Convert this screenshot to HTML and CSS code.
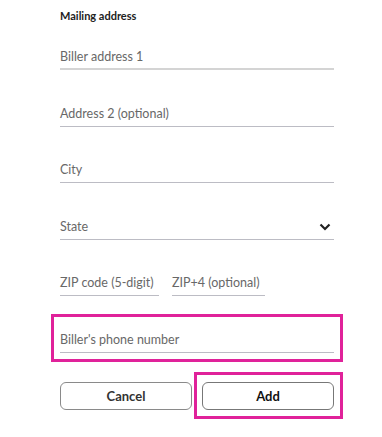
FILE: index.html
```html
<!DOCTYPE html>
<html lang="en">
<head>
    <meta charset="UTF-8">
    <meta name="viewport" content="width=device-width, initial-scale=1.0">
    <title>Mailing address</title>
    <link rel="stylesheet" href="styles.css">
</head>
<body>
    <div class="form">
        <h2 class="section-title">Mailing address</h2>
        <div class="field field-active"><span class="placeholder">Biller address 1</span></div>
        <div class="field"><span class="placeholder">Address 2 (optional)</span></div>
        <div class="field"><span class="placeholder">City</span></div>
        <div class="field field-select">
            <span class="placeholder">State</span>
            <svg class="chevron" width="12" height="8" viewBox="0 0 12 8">
                <path d="M1.5 1.5 L6 6 L10.5 1.5" fill="none" stroke="#222" stroke-width="2.2"/>
            </svg>
        </div>
        <div class="zip-row">
            <div class="field field-zip"><span class="placeholder">ZIP code (5-digit)</span></div>
            <div class="field field-zip4"><span class="placeholder">ZIP+4 (optional)</span></div>
        </div>
        <div class="highlight phone-box">
            <div class="field field-phone"><span class="placeholder">Biller's phone number</span></div>
        </div>
        <div class="actions">
            <button class="btn">Cancel</button>
            <div class="highlight add-box">
                <button class="btn btn-primary">Add</button>
            </div>
        </div>
    </div>
</body>
</html>
```

FILE: styles.css
```css
body {
    margin: 0;
    padding: 0;
    background-color: #ffffff;
    font-family: Lato, "Open Sans", sans-serif;
    color: #222222;
}
.form {
    padding: 9px 48px 0 60px;
    width: 274px;
}
.section-title {
    margin: 0;
    font-size: 11px;
    line-height: 14px;
    font-weight: bold;
    color: #222222;
}
.field {
    margin-top: 34.5px;
    height: 18px;
    padding-bottom: 3px;
    border-bottom: 1px solid #bcbcc4;
    display: flex;
    align-items: center;
    justify-content: space-between;
}
.field-active {
    margin-top: 25px;
    border-bottom: 2px solid #d4d4d4;
    height: 17px;
}
.placeholder {
    font-size: 12.5px;
    line-height: 18px;
    color: #686868;
}
.chevron {
    margin-right: 3px;
}
.zip-row {
    display: flex;
    gap: 13px;
}
.field-zip {
    width: 99px;
}
.field-zip4 {
    width: 93px;
}
/* pink annotation boxes */
.highlight {
    border: 3px solid #e0229a;
}
.phone-box {
    margin: 18px 0 0 -9px;
    width: 274px;
    padding: 0 6px 6px 6px;
}
.field-phone {
    margin-top: 14px;
}
.actions {
    display: flex;
    align-items: center;
    gap: 2px;
    margin-top: 10px;
}
.actions > * {
    flex-shrink: 0;
}
.btn {
    width: 132px;
    height: 28px;
    background-color: #ffffff;
    border: 1px solid #8a8a8a;
    border-radius: 6px;
    font-family: Lato, "Open Sans", sans-serif;
    font-size: 13px;
    font-weight: bold;
    color: #333333;
    cursor: pointer;
}
.btn-primary {
    color: #111111;
    border-color: #777777;
}
.add-box {
    padding: 7px 6px 6px 5px;
}
```
